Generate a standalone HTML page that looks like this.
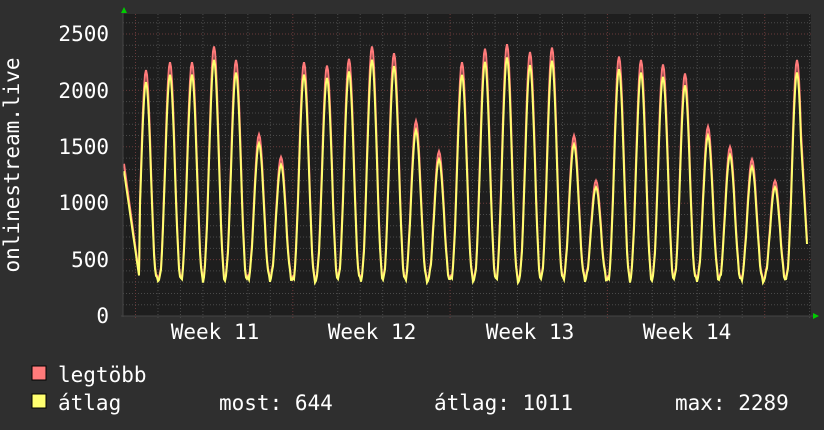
<!DOCTYPE html>
<html><head><meta charset="utf-8"><style>
html,body{margin:0;padding:0;background:#2f2f2f;}
svg{display:block}
text{font-family:"DejaVu Sans Mono","Liberation Mono",monospace;fill:#fff}
</style></head><body>
<svg id="g" width="824" height="430" xmlns="http://www.w3.org/2000/svg">
<rect width="824" height="430" fill="#2f2f2f"/>
<rect x="123" y="14" width="688" height="302" fill="#1e1e1e"/>
<g id="grid"></g>
<polyline id="mx" fill="none" stroke="#ff7a7a" stroke-width="2"/>
<polyline id="av" fill="none" stroke="#ffff70" stroke-width="2"/>
<line x1="123" y1="12" x2="123" y2="317" stroke="#444" stroke-width="1"/>
<line x1="121" y1="316" x2="814" y2="316" stroke="#444" stroke-width="1"/>
<polygon points="121,13 127,13 124,7" fill="#0c0"/>
<polygon points="813,313 813,319 819,316" fill="#0c0"/>
<g font-size="21" text-anchor="end">
<text x="109" y="41">2500</text>
<text x="109" y="98">2000</text>
<text x="109" y="154">1500</text>
<text x="109" y="210">1000</text>
<text x="109" y="267">500</text>
<text x="109" y="323">0</text>
</g>
<text transform="translate(19,165) rotate(-90)" font-size="21" text-anchor="middle">onlinestream.live</text>
<g font-size="21" text-anchor="middle">
<text x="215" y="339">Week 11</text>
<text x="372" y="339">Week 12</text>
<text x="530" y="339">Week 13</text>
<text x="687" y="339">Week 14</text>
</g>
<rect x="32" y="366" width="14" height="14" fill="#ff7a7a" stroke="#000" stroke-width="1"/>
<rect x="32" y="394" width="14" height="14" fill="#ffff70" stroke="#000" stroke-width="1"/>
<g font-size="21">
<text x="58" y="382">legtöbb</text>
<text x="58" y="410">átlag</text>
<text x="219" y="410">most: 644</text>
<text x="434" y="410">átlag: 1011</text>
<text x="675" y="410">max: 2289</text>
</g>
</svg>
<script>
var ns="http://www.w3.org/2000/svg",g=document.getElementById('grid');
function ln(x1,y1,x2,y2,c){var l=document.createElementNS(ns,'line');l.setAttribute('x1',x1);l.setAttribute('y1',y1);l.setAttribute('x2',x2);l.setAttribute('y2',y2);l.setAttribute('stroke',c);l.setAttribute('stroke-dasharray','1,2');g.appendChild(l);}
function Y(v){return 316-v*282/2500;}
for(var v=100;v<=2700;v+=100){var y=Y(v);if(y<14)break;ln(123,y,811,y,v%500==0?'#6a3a3a':'#4a4a4a');}
var w0=135.5,wk=157.3;
for(var i=-1;i<40;i++){var x=w0+i*wk/7;if(x<123||x>811)continue;ln(x,14,x,318,(i%7==0)?'#6a3a3a':'#4a4a4a');}
var pk=[[146,2180],[170,2250],[192,2250],[214,2390],[236,2270],[259,1610],[281,1410],[304,2250],[327,2220],[349,2280],[372,2390],[394,2330],[416,1730],[439,1460],[462,2250],[485,2370],[507,2410],[530,2340],[552,2380],[574,1600],[596,1200],[619,2300],[641,2270],[663,2230],[685,2150],[708,1680],[730,1500],[752,1390],[775,1200],[797,2270]];
var m=[],a=[];
for(var x=124;x<=807;x++){
 var best=null,d=1e9;for(var k=0;k<pk.length;k++){var dd=Math.abs(x-pk[k][0]);if(dd<d){d=dd;best=pk[k];}}
 var ph=(x-best[0])/22.6*2*Math.PI;var s=Math.pow((1+Math.cos(ph))/2,1.2);
 var mn=310+((x*37)%7)*8;
 var vm=mn+(best[1]-mn)*s;
 if(x<140){vm=1350-(x-124)*65;if(vm<330)vm=330;}
 if(x>800){vm=2270-(x-797)*160;if(vm<650)vm=650;}
 var va=mn-15+(vm-mn)*0.95;
 m.push(x+','+Y(vm).toFixed(1));a.push(x+','+Y(va).toFixed(1));}
document.getElementById('mx').setAttribute('points',m.join(' '));
document.getElementById('av').setAttribute('points',a.join(' '));
</script>
</body></html>
